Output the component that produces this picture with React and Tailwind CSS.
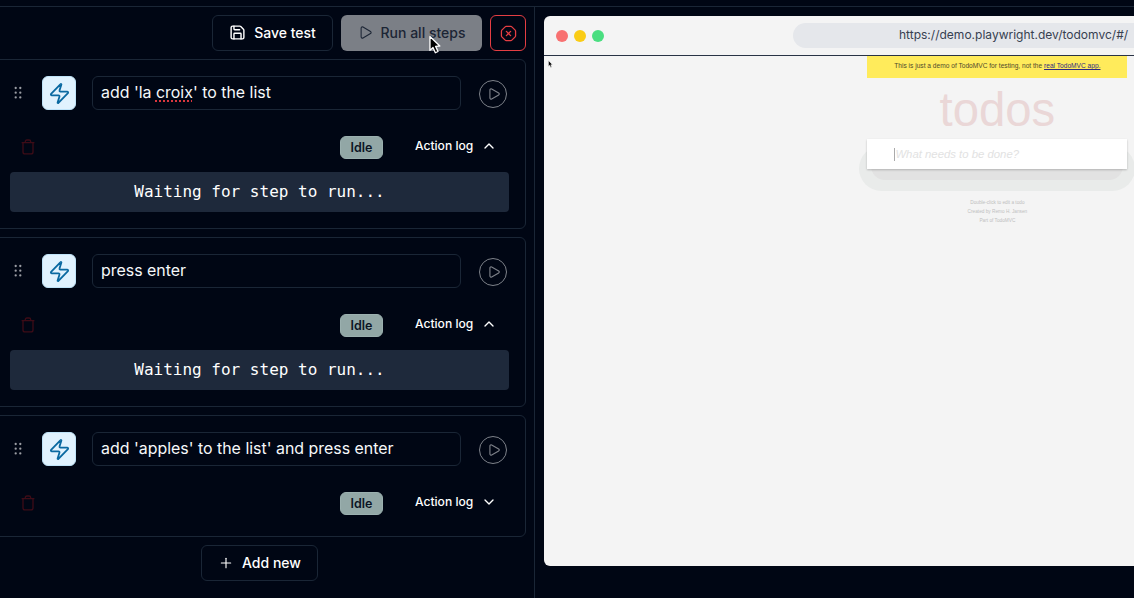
import React from 'react';
import { ChevronDown, ChevronUp, OctagonX, Play, Plus, Save, Zap } from 'lucide-react';

function DragDots() {
  return (
    <svg width="10" height="14" viewBox="0 0 10 14" className="fill-[#9a9da4]">
      {[2, 6.7, 11.4].map((y) => (
        <React.Fragment key={y}>
          <circle cx="2.7" cy={y} r="1.15" />
          <circle cx="7.3" cy={y} r="1.15" />
        </React.Fragment>
      ))}
    </svg>
  );
}

function TrashIcon() {
  return (
    <svg width="14" height="16" viewBox="0 0 14 16" fill="none" stroke="#3d0c17" strokeWidth="1.3">
      <path d="M0.6 3.7H13.4M2 3.7V12.9Q2 14.9 4 14.9H10Q12 14.9 12 12.9V3.7M4.3 3.5V2.7Q4.3 1 6 1H8Q9.7 1 9.7 2.7V3.5" />
    </svg>
  );
}

function Pointer({ size = 20 }) {
  return (
    <svg width={size * 0.62} height={size} viewBox="0 0 12.4 20">
      <path d="M1 1.5V16.2L4.2 13.1L6.7 18.7L9.5 17.4L7 12L11.4 11.6Z" fill="#000" stroke="#fff" strokeWidth="1.4" strokeLinejoin="round" />
    </svg>
  );
}

function Step({ open, children }) {
  const Chevron = open ? ChevronUp : ChevronDown;
  return (
    <section className={`-ml-2 w-[534px] rounded-md border border-[#1a2636] pl-[17px] pr-4 ${open ? 'h-[170px]' : 'h-[122px]'}`}>
      <div className="flex h-[50px] items-end">
        <div className="mb-[10px] ml-[3px] w-[10px]"><DragDots /></div>
        <div className="ml-[19px] flex h-[34px] w-[34px] items-center justify-center rounded-md border border-[#bfe3f8] bg-[#e0f2fe] text-[#0969a1]">
          <Zap size={23} strokeWidth={1.9} />
        </div>
        <div className="ml-4 flex h-[34px] w-[369px] items-center rounded-md border border-[#1a2636] px-2 pb-px text-[15.93px] text-[#f6f8fa]">
          <p className="whitespace-pre">{children}</p>
        </div>
        <div className="mb-[2px] ml-[18px] flex h-7 w-7 items-center justify-center rounded-full border border-[#7e828a] pl-px text-[#7e828a]">
          <Play size={14} strokeWidth={1.9} />
        </div>
      </div>
      <div className="mt-[26px] flex h-[23px] items-center">
        <div className="-mt-[2px] ml-[11px] w-[319px]"><TrashIcon /></div>
        <div className="flex h-[23px] w-[43px] items-center justify-center rounded-md border border-[#9bb0af] bg-[#92a7a6] pt-px text-[12.5px] font-semibold text-[#0b1424]">Idle</div>
        <div className="-mt-[2px] ml-8 flex items-center gap-2 text-[12.1px] font-medium text-white">
          <span className="w-[58px] whitespace-nowrap">Action log</span>
          <Chevron size={16} strokeWidth={2} />
        </div>
      </div>
      {open && (
        <div className="mt-[13px] flex h-10 w-[499px] items-center justify-center rounded bg-[#1e293b] font-['DejaVu_Sans_Mono',monospace] text-[16px] text-white">
          Waiting for step to run...
        </div>
      )}
    </section>
  );
}

function TodoPage() {
  return (
    <div className="ml-[323.4px] w-[260px] font-['Liberation_Sans',Arial,sans-serif]">
      <div className="h-[22px] bg-[#ffeb5b] text-center text-[6.62px] leading-[20px] text-[#4f4a2c]">
        This is just a demo of TodoMVC for testing, not the <span className="text-[#2f2a80] underline">real TodoMVC app.</span>
      </div>
      <h1 className="mt-[4px] h-[57px] text-center text-[47.3px] leading-[56px] text-[#ead7d7]">todos</h1>
      <div className="relative h-[30px]">
        <div className="absolute -left-2 -right-2 top-[7px] h-[45px] rounded-[26px] bg-[#e9ebea]" />
        <div className="absolute left-1 right-1 top-[13px] h-7 rounded-[22px] bg-[#e2e2e2]" />
        <div className="relative flex h-[30px] items-center bg-white pl-[27px] text-[11.35px] italic text-[#e2e2e2] shadow-[0_1px_2px_rgba(0,0,0,.22)]">
          <span className="h-[13px] w-px bg-[#aaaaaa]" />
          <span className="pt-px">What needs to be done?</span>
        </div>
      </div>
      <div className="mt-[28.5px] text-center text-[4.73px] leading-[9.4px] text-[#c0c0c0]">
        <p>Double-click to edit a todo</p>
        <p>Created by Remo H. Jansen</p>
        <p>Part of TodoMVC</p>
      </div>
    </div>
  );
}

export default function App() {
  return (
    <div className="relative flex h-[598px] w-[1134px] flex-col overflow-hidden bg-[#000614] pt-[6px] font-['Inter',sans-serif]">
      <div className="flex flex-1 border-t border-[#1a2636]">
        <main className="flex w-[535px] flex-none flex-col gap-2 overflow-hidden border-r border-[#1a2636] pt-2">
          <div className="flex h-9 flex-none justify-end gap-2 pr-2">
            <button className="flex w-[121px] items-center justify-center gap-2 rounded-md border border-[#1a2636] pb-px text-[14px] font-medium text-white">
              <Save size={17} strokeWidth={2} />Save test
            </button>
            <button className="flex w-[141px] items-center justify-center gap-2 rounded-md bg-[#7b7f86] pb-px text-[14px] font-medium text-[#1c2535]">
              <Play size={15} strokeWidth={1.7} />Run all steps
            </button>
            <button className="flex w-9 items-center justify-center rounded-md border border-[#e43e43] text-[#e43e43]">
              <OctagonX size={17} strokeWidth={1.8} />
            </button>
          </div>
          <Step open>add 'la <span className="underline decoration-[#d9363e] decoration-dotted decoration-2 underline-offset-[3px]">croix</span>' to the list</Step>
          <Step open>press enter</Step>
          <Step>add 'apples' to the list' and press enter</Step>
          <button className="ml-[201px] flex h-9 w-[117px] flex-none items-center justify-center gap-2 rounded-md border border-[#1a2636] pb-px text-[14px] font-medium text-white">
            <Plus size={16} strokeWidth={1.7} />Add new
          </button>
        </main>
        <aside className="flex-1 overflow-hidden pl-[9px] pt-[9px]">
          <div className="h-[550px] overflow-hidden rounded-l-md bg-[#f4f4f4]">
            <div className="flex h-10 items-center border-b border-[#293345] pl-3">
              <div className="flex gap-[6px]">
                <span className="h-3 w-3 rounded-full bg-[#f87171]" />
                <span className="h-3 w-3 rounded-full bg-[#facc15]" />
                <span className="h-3 w-3 rounded-full bg-[#4ade80]" />
              </div>
              <div className="ml-[189px] flex h-[25px] flex-1 items-center rounded-l-full bg-[#e5e7eb] pl-[106px] text-[12.03px] text-[#374151]">
                <span className="whitespace-nowrap">https://demo.playwright.dev/todomvc/#/</span>
              </div>
            </div>
            <div className="relative">
              <div className="absolute left-1 top-1"><Pointer size={8} /></div>
              <TodoPage />
            </div>
          </div>
        </aside>
      </div>
      <div className="absolute left-[429px] top-[35px]"><Pointer size={19} /></div>
    </div>
  );
}
